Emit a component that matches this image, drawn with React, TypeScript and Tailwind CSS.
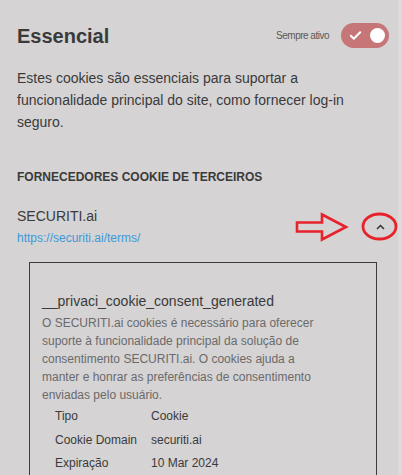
import React from 'react'

// ─────────────────────────────────────────────────────────────────────────────
// Cookie preference panel (Essencial)
// ─────────────────────────────────────────────────────────────────────────────
const details = [
  { label: 'Tipo', value: 'Cookie' },
  { label: 'Cookie Domain', value: 'securiti.ai' },
  { label: 'Expiração', value: '10 Mar 2024' },
]

const descriptionLines = [
  'O SECURITI.ai cookies é necessário para oferecer',
  'suporte à funcionalidade principal da solução de',
  'consentimento SECURITI.ai. O cookies ajuda a',
  'manter e honrar as preferências de consentimento',
  'enviadas pelo usuário.',
]

function Toggle() {
  return (
    <div className="flex items-center justify-between w-[48px] h-[25px] rounded-full bg-[#c67676] pl-[8px] pr-[4px]">
      <svg width="13" height="11" viewBox="0 0 13 11" fill="none">
        <path
          d="M1.8 5.8 L4.8 8.8 L11.2 2.2"
          stroke="#ffffff"
          strokeWidth="2"
          strokeLinecap="round"
          strokeLinejoin="round"
        />
      </svg>
      <span className="w-[15px] h-[15px] rounded-full bg-white" />
    </div>
  )
}

export default function App() {
  return (
    <div className="w-[402px] h-[475px] overflow-hidden flex bg-[#d5d3d4] font-['Liberation_Sans',Arial,sans-serif]">
      <div className="flex-1 pl-[17px] pr-[9px]">
        {/* header */}
        <div className="mt-[23px] flex items-center justify-between">
          <h2 className="text-[20px] leading-[24px] font-bold text-[#3a3a3a]">
            Essencial
          </h2>
          <div className="flex items-center gap-[12px]">
            <span className="text-[10px] tracking-[-0.5px] text-[#5a5a5a]">
              Sempre ativo
            </span>
            <Toggle />
          </div>
        </div>

        <p className="mt-[19px] text-[14px] leading-[22px] text-[#3a3a3a]">
          Estes cookies são essenciais para suportar a funcionalidade principal
          do site, como fornecer log-in seguro.
        </p>

        <h3 className="mt-[36px] text-[12px] leading-[16px] font-bold uppercase text-[#3a3a3a]">
          Fornecedores cookie de terceiros
        </h3>

        {/* vendor row */}
        <div className="relative mt-[22px] flex items-center justify-between">
          <div>
            <p className="text-[14px] leading-[18px] text-[#3a3a3a]">
              SECURITI.ai
            </p>
            <a className="mt-[5px] block text-[12px] leading-[16px] text-[#3d9ad8]">
              https://securiti.ai/terms/
            </a>
          </div>
          <span className="w-[18px] h-[18px] flex items-center justify-center">
            <svg width="9" height="6" viewBox="0 0 9 6" fill="none">
              <path
                d="M1 5 L4.5 1.5 L8 5"
                stroke="#333333"
                strokeWidth="1.5"
              />
            </svg>
          </span>
          {/* red annotation */}
          <svg
            className="absolute left-[278px] top-[4px]"
            width="108"
            height="34"
            viewBox="0 0 108 34"
            fill="none"
          >
            <path
              d="M2 11.5 L27 11.5 L27 3.5 L51 16 L27 28.5 L27 20.5 L2 20.5 Z"
              stroke="#e8222a"
              strokeWidth="2.6"
              strokeLinejoin="miter"
            />
            <ellipse
              cx="84.5"
              cy="15.5"
              rx="16.5"
              ry="12.5"
              stroke="#e8222a"
              strokeWidth="2.8"
            />
          </svg>
        </div>

        {/* cookie detail box */}
        <div className="mt-[16px] ml-[12px] w-[348px] h-[260px] border border-[#3c3c3c] pl-[12px] pr-[12px] pt-[29px]">
          <p className="text-[14px] leading-[18px] text-[#3a3a3a]">
            __privaci_cookie_consent_generated
          </p>
          <p className="mt-[4px] text-[12px] leading-[18px] text-[#6a6a6a]">
            {descriptionLines.map((line, i) => (
              <React.Fragment key={i}>
                {line}
                {i < descriptionLines.length - 1 && <br />}
              </React.Fragment>
            ))}
          </p>
          <div className="mt-[1px] pl-[13px]">
            {details.map((d) => (
              <div
                key={d.label}
                className="flex text-[12px] leading-[23.5px] text-[#3a3a3a]"
              >
                <span className="w-[96px]">{d.label}</span>
                <span>{d.value}</span>
              </div>
            ))}
          </div>
        </div>
      </div>
      <div className="w-[4px] bg-[#dddbdc]" />
    </div>
  )
}
